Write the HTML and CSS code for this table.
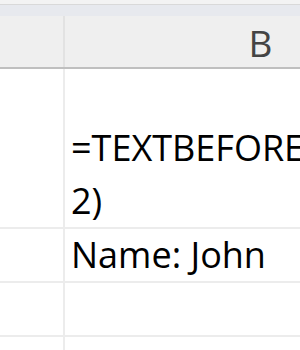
FILE: index.html
```html
<!DOCTYPE html>
<html>
<head>
<meta charset="utf-8">
<link rel="stylesheet" href="styles.css">
</head>
<body>
<div class="sheet">
  <div class="topstrip"></div>
  <div class="band"></div>
  <div class="row header">
    <div class="cell a"></div>
    <div class="cell b colhead">B</div>
  </div>
  <div class="row r1">
    <div class="cell a"></div>
    <div class="cell b"><div class="ln">=TEXTBEFORE</div><div class="ln">2)</div></div>
  </div>
  <div class="row r2">
    <div class="cell a"></div>
    <div class="cell b"><div class="ln">Name: John</div></div>
  </div>
  <div class="row r3">
    <div class="cell a"></div>
    <div class="cell b"></div>
  </div>
  <div class="row r4">
    <div class="cell a"></div>
    <div class="cell b"></div>
  </div>
</div>
</body>
</html>
```
FILE: styles.css
```css
html, body {
  margin: 0;
  padding: 0;
  background: #ffffff;
  overflow: hidden;
}
.sheet {
  width: 300px;
  height: 350px;
  overflow: hidden;
  font-family: "Open Sans", Lato, sans-serif;
}
.topstrip {
  height: 4px;
  background: #f3f3f3;
  border-bottom: 1px solid #d9d9d9;
}
.band {
  height: 11px;
  background: #e7e9ee;
}
.row {
  display: flex;
  width: 460px;
}
.cell {
  flex: none;
  box-sizing: border-box;
}
.cell.a {
  width: 65px;
  border-right: 2px solid #ececec;
}
.cell.b {
  width: 385px;
  padding-left: 6px;
  display: flex;
  flex-direction: column;
  justify-content: flex-end;
  overflow: hidden;
}
.header {
  height: 53px;
  background: #efefef;
  border-bottom: 2px solid #bfbfbf;
  box-sizing: border-box;
}
.header .cell.a {
  border-right-color: #e2e2e2;
}
.colhead {
  align-items: center;
  justify-content: center;
  padding-left: 0;
  padding-top: 4px;
  color: #444444;
  font-size: 37px;
  line-height: 48px;
}
.r1 {
  height: 160px;
  border-bottom: 2px solid #ececec;
  box-sizing: border-box;
}
.r2, .r3, .r4 {
  height: 54px;
  border-bottom: 2px solid #ececec;
  box-sizing: border-box;
}
.ln {
  font-size: 36px;
  line-height: 53px;
  color: #000000;
  white-space: nowrap;
}
```
